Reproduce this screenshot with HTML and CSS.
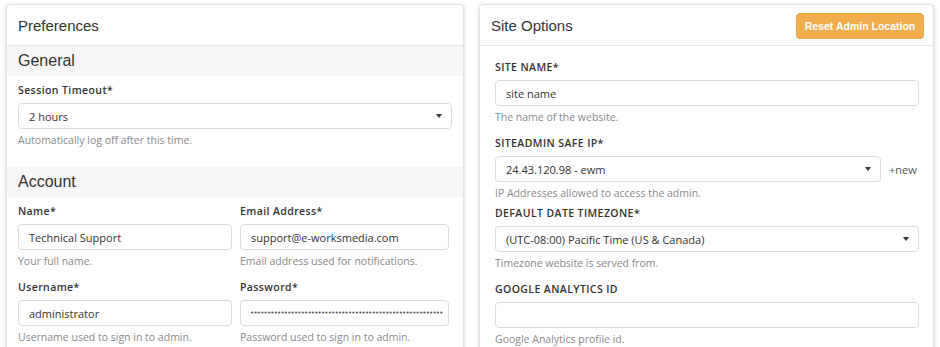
FILE: index.html
```html
<!DOCTYPE html>
<html>
<head>
<meta charset="utf-8">
<link rel="stylesheet" href="styles.css">
</head>
<body>
<div class="page">
  <div class="panel panel-left">
    <div class="panel-head"><h2>Preferences</h2></div>
    <div class="section-title">General</div>
    <div class="section-body">
      <div class="group">
        <label>Session Timeout*</label>
        <div class="field select"><span>2 hours</span><i class="caret"></i></div>
        <div class="help">Automatically log off after this time.</div>
      </div>
    </div>
    <div class="section-title">Account</div>
    <div class="section-body">
      <div class="grid">
        <div class="group">
          <label>Name*</label>
          <div class="field"><span>Technical Support</span></div>
          <div class="help">Your full name.</div>
        </div>
        <div class="group">
          <label>Email Address*</label>
          <div class="field"><span>support@e-worksmedia.com</span></div>
          <div class="help">Email address used for notifications.</div>
        </div>
        <div class="group">
          <label>Username*</label>
          <div class="field"><span>administrator</span></div>
          <div class="help">Username used to sign in to admin.</div>
        </div>
        <div class="group">
          <label>Password*</label>
          <div class="field pw"><span class="dots">•••••••••••••••••••••••••••••••••••••••••••••••••••••••••</span></div>
          <div class="help">Password used to sign in to admin.</div>
        </div>
      </div>
    </div>
  </div>
  <div class="panel panel-right">
    <div class="panel-head">
      <h2>Site Options</h2>
      <button class="btn-warn">Reset Admin Location</button>
    </div>
    <div class="right-body">
      <div class="group">
        <label class="up">Site Name*</label>
        <div class="field"><span>site name</span></div>
        <div class="help">The name of the website.</div>
      </div>
      <div class="group">
        <label class="up">Siteadmin Safe IP*</label>
        <div class="inline">
          <div class="field select grow"><span>24.43.120.98 - ewm</span><i class="caret"></i></div>
          <span class="add">+new</span>
        </div>
        <div class="help">IP Addresses allowed to access the admin.</div>
      </div>
      <div class="group tight">
        <label class="up">Default Date Timezone*</label>
        <div class="field select"><span>(UTC-08:00) Pacific Time (US &amp; Canada)</span><i class="caret"></i></div>
        <div class="help">Timezone website is served from.</div>
      </div>
      <div class="group">
        <label class="up">Google Analytics ID</label>
        <div class="field"><span></span></div>
        <div class="help">Google Analytics profile id.</div>
      </div>
    </div>
  </div>
</div>
</body>
</html>
```

FILE: styles.css
```css
html, body {
  margin: 0;
  padding: 0;
  background: #ffffff;
  overflow: hidden;
  height: 347px;
}
.page {
  display: flex;
  gap: 15px;
  padding: 4px 0 0 6px;
  font-family: "Open Sans", "Liberation Sans", sans-serif;
  color: #333;
}
.panel {
  background: #fff;
  border: 1px solid #e2e2e2;
  border-radius: 4px;
  box-shadow: 0 1px 4px rgba(0, 0, 0, 0.18);
  height: 420px;
  box-sizing: border-box;
}
.panel-left { width: 458px; }
.panel-right { width: 455px; }
.panel-head {
  height: 40px;
  border-bottom: 1px solid #e6e6e6;
  display: flex;
  align-items: center;
  justify-content: space-between;
  padding: 0 9px 0 11px;
}
.panel-head h2 {
  margin: 0;
  font-family: "Liberation Sans", Arial, sans-serif;
  font-weight: normal;
  font-size: 15px;
  color: #333;
}
.btn-warn {
  width: 128px;
  height: 26px;
  border: 1px solid #eea63f;
  background: #f0ad4e;
  color: #fff;
  border-radius: 4px;
  font-family: "Liberation Sans", Arial, sans-serif;
  font-weight: bold;
  font-size: 10.5px;
  padding: 0;
  margin-top: 1px;
}
.section-title {
  height: 30px;
  line-height: 30px;
  background: #f7f7f7;
  padding-left: 11px;
  font-family: "Liberation Sans", Arial, sans-serif;
  font-size: 16px;
  color: #333;
}
.section-body {
  padding: 7px 11px 20px 11px;
}
.grid {
  display: grid;
  grid-template-columns: 214px 209px;
  column-gap: 8px;
  row-gap: 12px;
}
.group label {
  display: block;
  font-size: 10.5px;
  font-weight: 600;
  letter-spacing: 0.4px;
  line-height: 14px;
  color: #333;
  margin-bottom: 6px;
}
.group label.up { text-transform: uppercase; }
.field {
  height: 26px;
  box-sizing: border-box;
  border: 1px solid #dcdcdc;
  border-radius: 4px;
  padding: 0 10px;
  display: flex;
  align-items: center;
  font-size: 11px;
  color: #333;
  overflow: hidden;
  white-space: nowrap;
}
.field.select {
  justify-content: space-between;
  padding-left: 10px;
  padding-right: 9px;
}
.caret {
  width: 0;
  height: 0;
  border-left: 3.5px solid transparent;
  border-right: 3.5px solid transparent;
  border-top: 4px solid #333;
}
.field.pw { padding-left: 9px; }
.field.pw .dots {
  font-family: "DejaVu Sans", sans-serif;
  font-size: 7px;
  letter-spacing: -0.75px;
  color: #555;
}
.help {
  margin-top: 4px;
  line-height: 14px;
  font-size: 10.5px;
  color: #8a8a8a;
}
.right-body {
  padding: 14px 14px 0 15px;
}
.right-body .group { margin-bottom: 12px; }
.right-body .group.tight { margin-top: -6px; }
.inline {
  display: flex;
  align-items: center;
  gap: 8px;
}
.grow { flex: 0 0 386px; }
.add {
  font-size: 11px;
  color: #555;
}
```
